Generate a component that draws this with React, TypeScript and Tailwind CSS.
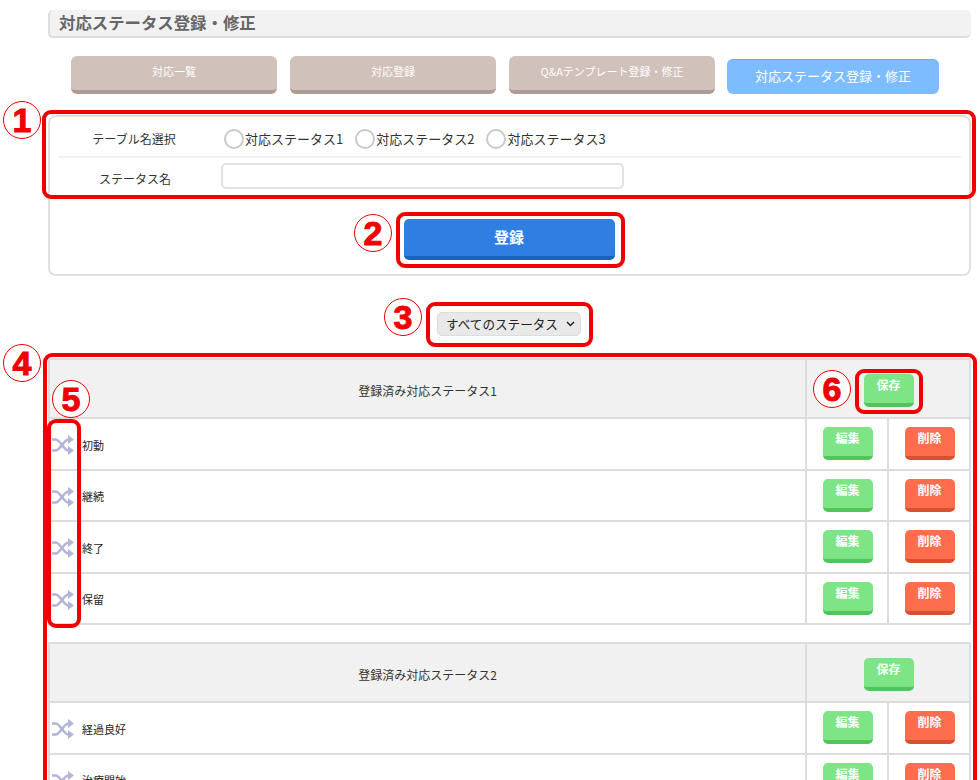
import React from 'react';

const font = "font-['Noto_Sans_CJK_JP','Liberation_Sans',sans-serif]";

const tabs = ['対応一覧', '対応登録', 'Q&Aテンプレート登録・修正'];
const radios = ['対応ステータス1', '対応ステータス2', '対応ステータス3'];

const ShuffleIcon = () => (
  <svg width="24" height="20" viewBox="0 0 24 20" fill="none" stroke="#b3b5d8" strokeWidth="2.6">
    <path d="M1 4.5h3.5c5 0 8 11 13 11h2" />
    <path d="M1 15.5h3.5c5 0 8-11 13-11h2" />
    <path d="M17 0l6 4.5-6 4.5z" fill="#b3b5d8" stroke="none" />
    <path d="M17 11l6 4.5-6 4.5z" fill="#b3b5d8" stroke="none" />
  </svg>
);

const ActionButton = ({ label, color }: { label: string; color: 'green' | 'red' }) => (
  <button
    className={`w-[50px] h-[33px] rounded-[5px] border-b-[4px] pb-[7px] text-[12px] leading-none font-bold text-white ${
      color === 'green' ? 'bg-[#7de585] border-[#52c45c]' : 'bg-[#ff6e4c] border-[#d9502f]'
    }`}
  >
    {label}
  </button>
);

const StatusTable = ({ title, rows }: { title: string; rows: string[] }) => (
  <table className="w-[923px] border-collapse table-fixed text-[11px] text-[#222]">
    <thead>
      <tr className="h-[59px] bg-[#f1f1f1]">
        <th className="border-2 border-[#dcdcdc] pt-[4px] text-[12px] font-normal text-[#333]">{title}</th>
        <th colSpan={2} className="w-[164px] border-2 border-[#dcdcdc] pl-[1px] pt-[3px] align-middle">
          <div className="flex justify-center">
            <ActionButton label="保存" color="green" />
          </div>
        </th>
      </tr>
    </thead>
    <tbody>
      {rows.map((row) => (
        <tr key={row} className="h-[51.5px]">
          <td className="border-2 border-[#dcdcdc]">
            <div className="flex items-center gap-[7px] pl-[1px] pt-[3px]">
              <ShuffleIcon />
              <span className="-mt-[1px]">{row}</span>
            </div>
          </td>
          <td className="w-[82px] border-2 border-[#dcdcdc] pl-[1px] text-center">
            <div className="flex justify-center">
              <ActionButton label="編集" color="green" />
            </div>
          </td>
          <td className="w-[82px] border-2 border-[#dcdcdc] pl-[1px] text-center">
            <div className="flex justify-center">
              <ActionButton label="削除" color="red" />
            </div>
          </td>
        </tr>
      ))}
    </tbody>
  </table>
);

// 赤枠と丸数字の注釈
const Frame = ({ className }: { className: string }) => (
  <div className={`absolute border-[4px] border-[#f00000] rounded-[9px] pointer-events-none ${className}`} />
);

const Num = ({ n, className }: { n: string; className: string }) => (
  <div
    className={`absolute w-[38px] h-[38px] rounded-full bg-white border-[1.5px] border-[#f00000] flex items-center justify-center font-['Liberation_Sans',sans-serif] text-[34px] leading-none font-bold text-[#f00000] [-webkit-text-stroke:1px_#f00000] ${className}`}
  >
    {n}
  </div>
);

export default function App() {
  return (
    <div className={`relative w-[980px] h-[780px] overflow-hidden bg-white pt-[10px] pl-[48px] ${font}`}>
      <div className="w-[923px] h-[28px] bg-[#f2f2f2] border-b-2 border-l-2 border-[#dedede] rounded-[5px] pl-[9px] text-[16.4px] leading-[24px] font-bold text-[#666]">
        対応ステータス登録・修正
      </div>

      <div className="flex items-end gap-[13px] mt-[18px] ml-[23px] h-[38px]">
        {tabs.map((tab) => (
          <div
            key={tab}
            className="w-[206px] h-[38px] bg-[#d0c1ba] border-b-[4px] border-[#ae9b93] rounded-[6px] pb-[4px] flex items-center justify-center text-[11px] text-white"
          >
            {tab}
          </div>
        ))}
        <div className="w-[212px] h-[35px] -ml-[1px] bg-[#7dbdff] rounded-[6px] border-t border-[#64a8ef] pb-[2px] flex items-center justify-center text-[13px] text-white">
          対応ステータス登録・修正
        </div>
      </div>

      <div className="w-[923px] h-[161px] mt-[21px] border-2 border-[#e0e0e0] rounded-[8px]">
        <div className="mx-[8px] h-[41px] pt-[4px] flex items-center border-b-2 border-[#f1f1f1] text-[13px] text-[#333]">
          <div className="w-[150px] pl-[2px] text-center text-[12px]">テーブル名選択</div>
          <div className="flex ml-[16px] gap-[12px]">
            {radios.map((radio) => (
              <label key={radio} className="flex items-center gap-[1px]">
                <span className="w-[20px] h-[20px] rounded-full border-2 border-[#c9c9c9] bg-white" />
                <span>{radio}</span>
              </label>
            ))}
          </div>
        </div>
        <div className="mx-[8px] h-[36px] flex items-center text-[12px] text-[#333]">
          <div className="w-[150px] pl-[4px] pt-[6px] text-center">ステータス名</div>
          <input className="ml-[13px] w-[403px] h-[26px] border-2 border-[#e2e2e2] rounded-[5px] bg-white" />
        </div>
        <div className="flex justify-center mt-[25px] pr-[1px]">
          <button className="w-[211px] h-[41px] bg-[#2f7fe3] border-b-[4px] border-[#1562bf] rounded-[5px] text-[15px] font-bold text-white">
            登録
          </button>
        </div>
      </div>

      <div className="flex justify-center mt-[36px] h-[25px] pr-[10px]">
        <div className="w-[144px] h-[24px] bg-[#e9e9e9] border border-[#dcdcdc] rounded-[5px] flex items-center justify-between pl-[8px] pr-[5px] text-[12.6px] text-[#222]">
          <span>すべてのステータス</span>
          <svg width="9" height="6" viewBox="0 0 9 6" fill="none" stroke="#222" strokeWidth="1.5">
            <path d="M1 1l3.5 3.5L8 1" />
          </svg>
        </div>
      </div>

      <div className="mt-[21px]">
        <StatusTable title="登録済み対応ステータス1" rows={['初動', '継続', '終了', '保留']} />
      </div>
      <div className="mt-[17px]">
        <StatusTable title="登録済み対応ステータス2" rows={['経過良好', '治療開始']} />
      </div>

      <Frame className="left-[42px] top-[110px] w-[934px] h-[89px]" />
      <Frame className="left-[396px] top-[212px] w-[229px] h-[56px]" />
      <Frame className="left-[426px] top-[302px] w-[167px] h-[45px]" />
      <Frame className="left-[43px] top-[353px] w-[934px] h-[440px]" />
      <Frame className="left-[47px] top-[419px] w-[34px] h-[209px]" />
      <Frame className="left-[855px] top-[369px] w-[68px] h-[45px]" />

      <Num n="1" className="left-[3px] top-[101px]" />
      <Num n="2" className="left-[354px] top-[214px]" />
      <Num n="3" className="left-[384px] top-[298px]" />
      <Num n="4" className="left-[3px] top-[344px]" />
      <Num n="5" className="left-[52px] top-[380px]" />
      <Num n="6" className="left-[813px] top-[370px]" />
    </div>
  );
}
